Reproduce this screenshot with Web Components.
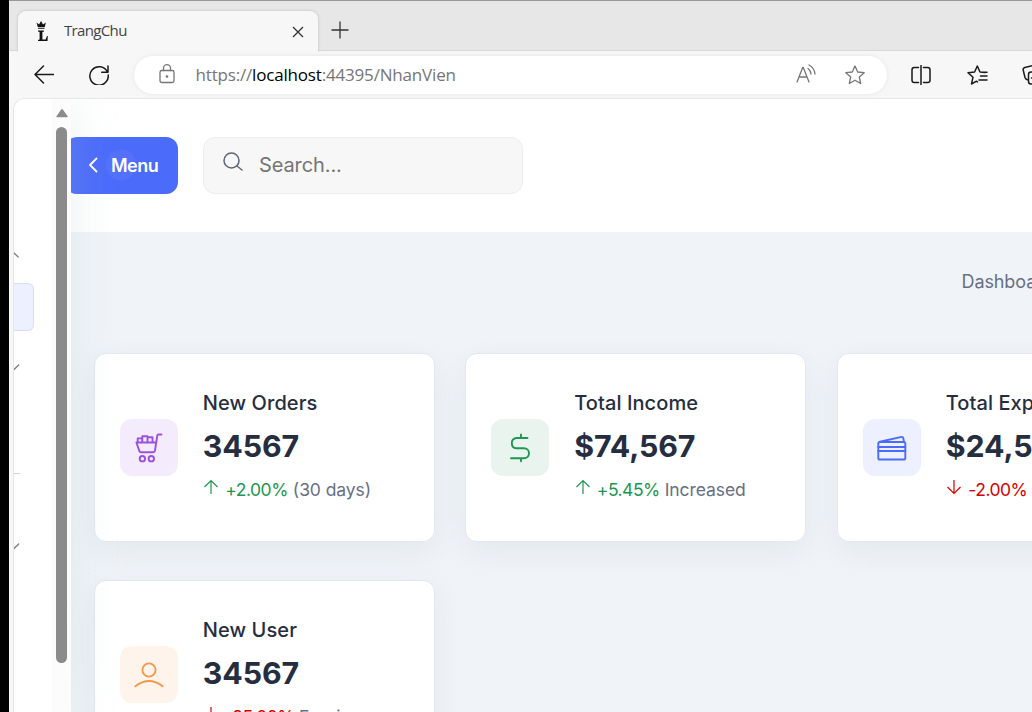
<!DOCTYPE html>
<html lang="vi">
<head>
<meta charset="utf-8">
<title>TrangChu</title>
<style>
html,body{margin:0;height:100%;overflow:hidden;background:#000}
body{font-family:Inter,"Liberation Sans",sans-serif}
</style>
</head>
<body>
<browser-window>
  <browser-tabs slot="tabs">TrangChu</browser-tabs>
  <browser-toolbar slot="toolbar"><span slot="scheme">https://</span><span slot="host">localhost</span><span slot="path">:44395/NhanVien</span></browser-toolbar>
  <side-rail></side-rail>
  <dash-main>
    <dash-header slot="header"></dash-header>
    <stat-card tone="purple" dir="up"><i-cart slot="icon"></i-cart><span slot="title">New Orders</span><span slot="value">34567</span><span slot="delta">+2.00%</span><span slot="note">(30 days)</span></stat-card>
    <stat-card tone="green" dir="up"><i-dollar slot="icon"></i-dollar><span slot="title">Total Income</span><span slot="value">$74,567</span><span slot="delta">+5.45%</span><span slot="note">Increased</span></stat-card>
    <stat-card tone="blue" dir="down"><i-cards slot="icon"></i-cards><span slot="title">Total Expense</span><span slot="value">$24,567</span><span slot="delta">-2.00%</span><span slot="note">Expense</span></stat-card>
    <stat-card tone="orange" dir="down"><i-user slot="icon"></i-user><span slot="title">New User</span><span slot="value">34567</span><span slot="delta">-25.00%</span><span slot="note">Earning</span></stat-card>
  </dash-main>
</browser-window>
<script>
function define(name, html) {
  const t = document.createElement('template');
  t.innerHTML = html;
  customElements.define(name, class extends HTMLElement {
    constructor() {
      super();
      this.attachShadow({mode: 'open'}).append(t.content.cloneNode(true));
    }
  });
}
const svg = (w, h, body, sw = 1.4) => `<svg width="${w}" height="${h}" viewBox="0 0 ${w} ${h}" fill="none" stroke="currentColor" stroke-width="${sw}" stroke-linecap="round" stroke-linejoin="round">${body}</svg>`;
const icon = (name, body, sw) => define(name, `<style>:host{display:block;width:58px;height:57px}svg{display:block}</style>${svg(58, 57, body, sw)}`);

icon('i-cart', `<path d="M41.500 15.500h-3q-1 0-1.200 1l-2.300 15q-.3 1.700-2 1.700H21q-1.300 0-1.700-1.300L16.400 23.500h19.300M17.700 23v-3.600h4.500V23M22.300 22.500v-5.300h5.200v5.500M27.500 18.200h5v4.500"/><circle cx="22.400" cy="39.700" r="2.700"/><circle cx="31.300" cy="39.700" r="2.700"/>`, 1.9);
icon('i-dollar', `<path d="M36.500 19H25.300a5.200 5.200 0 0 0 0 10.300h7.700a5 5 0 0 1 0 10H20M30 15.500V19M30 39.300v3"/>`, 1.9);
icon('i-cards', `<rect x="15.300" y="23" width="27" height="17.500" rx="1.600"/><path d="M15.300 28h27M15.300 32h27M17 22.700l21.500-4.800q1.400-.2 1.700 1l.8 4"/>`, 1.9);
icon('i-user', `<circle cx="29" cy="24" r="6.600"/><path d="M15.400 40.300q13.600-10.600 27.200 0"/>`, 1.9);

define('browser-window', `<style>
:host{display:flex;flex-direction:column;box-sizing:border-box;width:1023px;height:712px;margin-left:9px;background:#f7f7f7;overflow:hidden}
.page{flex:1;min-height:0;display:flex;margin-left:4px;border:1px solid #e6e6e6;border-right:0;border-bottom:0;border-radius:12px 0 0 0;background:#fff;overflow:hidden}
</style><slot name="tabs"></slot><slot name="toolbar"></slot><div class="page"><slot></slot></div>`);

define('browser-tabs', `<style>
:host{display:flex;box-sizing:border-box;height:51px;flex:none;background:#e7e7e7;border-top:1px solid #999;border-bottom:1px solid #d8d8d8;color:#444}
.tab{display:flex;align-items:center;box-sizing:border-box;width:300px;height:41px;margin:10px 0 -1px 9px;padding:0 13px 0 17px;background:#f7f7f7;border-radius:8px 8px 0 0;box-shadow:0 0 3px #bbb;clip-path:inset(-4px -4px 0 -4px)}
.name{flex:1;margin-left:13px;padding-bottom:3px;font:15px "Open Sans","Noto Sans",sans-serif;letter-spacing:-.65px}
.tab svg{flex:none}.tab .fav{margin-bottom:2px}.plus{margin:20px 0 0 12.500px}
</style><div class="tab">
<svg class="fav" width="16" height="22" viewBox="0 0 16 22" fill="#111"><path d="M1.500 2.500l2.500 2L6 1l2 3.500L10.800 2.500l-1 4.500H2.800zM3 7.800h6.500v1H3zM3 10.500h6v1l-1.600.5v7.500h3.200l1.400-3.500h.8L12.500 21H3v-1l1.600-.5V12L3 11.500z"/></svg>
<span class="name"><slot></slot></span>
<svg width="14" height="14" viewBox="0 0 14 14" stroke="#333" stroke-width="1.300"><path d="M2 2l10 10M12 2L2 12"/></svg></div>
<svg class="plus" width="18" height="18" viewBox="0 0 18 18" stroke="#333" stroke-width="1.300"><path d="M9 .5v17M.5 9h17"/></svg>`);

define('browser-toolbar', `<style>
:host{display:flex;align-items:center;box-sizing:border-box;height:47px;flex:none;padding-left:25px;color:#1a1a1a}
svg{display:block;flex:none}
.reload{margin-left:35px}
.bar{display:flex;flex:none;align-items:center;box-sizing:border-box;width:753px;height:38px;margin:0 24px 0 25px;padding:0 22px 0 24.500px;border-radius:19px;background:#fff;box-shadow:0 0 4px #e4e4e4;color:#767676}
.bar>svg:first-child{margin-bottom:1px}
.url{flex:1;margin-left:21px;font:17px "Open Sans","Noto Sans",sans-serif;letter-spacing:-.18px;white-space:nowrap}
.host{color:#000}
.read{margin:0 29px 2px 0}.fav{margin:0 33px 0 36px}
</style>
${svg(20, 20, '<path d="M19.500 9.500H1M9.500 1L1 9.500 9.500 18"/>', 1.5)}
<span class="reload">${svg(20, 20, '<path d="M18.500 7.300A9.200 9.200 0 1 0 19.200 10M19 1v6.300h-6.300"/>', 1.5)}</span>
<div class="bar">
${svg(16, 20, '<rect x="1" y="6.500" width="14" height="12" rx="1.800"/><path d="M4.500 6.500V4.200a3.500 3.500 0 0 1 7 0v2.300"/><circle cx="8" cy="12.500" r=".7" fill="currentColor"/>', 1.3)}
<span class="url"><slot name="scheme"></slot><span class="host"><slot name="host"></slot></span><slot name="path"></slot></span>
<span class="read">${svg(20, 20, '<path d="M1 18L6.700 3.500h.6L13 18M3.200 13h7.600M12 4.500q2.600 2 3 5.500M13 1q5.500 3 6 9"/>', 1.3)}</span>
${svg(20, 20, '<path d="M10 1l2.700 6 6.500.7-4.900 4.300 1.400 6.500L10 15.200l-5.700 3.300L5.700 12 .8 7.700 7.300 7z"/>', 1.3)}
</div>
${svg(20, 20, '<path d="M7.500 2.500H3.300Q1 2.500 1 4.800v10.400q0 2.300 2.300 2.300h4.200M12.500 2.500h4.200Q19 2.500 19 4.800v10.400q0 2.300-2.300 2.300h-4.200M10 .5v19"/>', 1.5)}
<span class="fav">${svg(22, 20, '<path d="M10.500 17l-1-.800-5 2.800L6 12.200 1 7.700 7.600 7 10.300 1 13 7l5 .6M13.500 11H20M12 15h8M14 7.200h6" />', 1.5)}</span>
${svg(20, 20, '<path d="M12 .3L2.800 2.500Q.8 3.200 1.200 5L3 12.500q.500 1.600 2.300 2.200"/><rect x="6.500" y="7" width="13" height="12" rx="2.500"/><path d="M9.500 13h7M13 9.500v7"/>', 1.5)}`);

define('side-rail', `<style>
:host{display:flex;flex:none;width:57px;background:#fff;position:relative;z-index:1;box-shadow:0 0 48px rgba(173,195,200,.24)}
.nav{display:flex;flex-direction:column;width:38px;color:#777d8c}
.nav svg{display:block;flex:none}
.up{margin-top:150px}.active{box-sizing:border-box;width:20px;height:48px;margin-top:24px;background:#ecf0ff;border:1px solid #d5ddff;border-left:0;border-radius:0 6px 6px 0}
.a{margin-top:31px}.line{width:6px;height:1px;margin-top:101px;background:#d0d3d9}.b{margin-top:67px}
.track{display:flex;flex-direction:column;align-items:center;width:19px;background:#fcfcfc}
.track svg{display:block;margin-top:10px}.thumb{width:11px;height:536px;margin-top:9px;border-radius:6px;background:#8b8b8b}
</style><div class="nav">
<span class="up">${svg(7, 10, '<path d="M0 4l4.200 4"/>', 1.3)}</span><div class="active"></div>
<span class="a">${svg(7, 10, '<path d="M0 7.500l4.700-4.500"/>', 1.3)}</span><div class="line"></div>
<span class="b">${svg(7, 10, '<path d="M0 7.500l4.700-4.500"/>', 1.3)}</span></div>
<div class="track"><svg width="12" height="9" viewBox="0 0 12 9" fill="#8b8b8b"><path d="M6 0q.6 0 1 .7l4.600 6.600q.4.900-.6.900H1q-1 0-.6-.900L5 .7Q5.400 0 6 0"/></svg><div class="thumb"></div></div>`);

define('dash-header', `<style>
:host{display:flex;align-items:flex-start;box-sizing:border-box;height:133px;padding-top:38px;background:#fff}
.menu{display:flex;align-items:center;box-sizing:border-box;width:113px;height:57px;margin-left:-6px;padding:0 0 1px 21.500px;border-radius:12px;background:radial-gradient(circle at 56px 28px,#5371fb 15px,#4b6bfb 15.500px);color:#fff;font-weight:600;font-size:18px;letter-spacing:-.5px}
.menu span{margin-left:13.500px}
.search{display:flex;align-items:center;box-sizing:border-box;width:320px;height:57px;margin-left:25px;padding:0 0 2px 19px;border:1px solid #ececec;border-radius:12px;background:#f7f7f7;color:#757575;font-size:20px;letter-spacing:-.1px}
.search svg{color:#5d657b;margin-top:-5px}.search span{margin-left:15px}
</style><div class="menu">${svg(11, 16, '<path d="M9.500 1.500L3 8l6.500 6.500"/>', 1.8)}<span>Menu</span></div>
<div class="search">${svg(21, 20, '<circle cx="8.500" cy="8.500" r="7.500"/><path d="M14 14l5 4"/>', 1.5)}<span>Search...</span></div>`);

define('dash-main', `<style>
:host{display:block;flex:1;min-width:0;overflow:hidden;background:#f0f4f9}
.crumb{margin:38px 0 0 890.500px;height:24px;line-height:24px;font-size:18px;letter-spacing:-.1px;color:#686f83;white-space:nowrap}
.grid{display:grid;grid-template-columns:repeat(3,341px);grid-auto-rows:189px;gap:38px 30.500px;margin:59px 0 0 22.800px}
</style><slot name="header"></slot><div class="crumb">Dashboard</div><div class="grid"><slot></slot></div>`);

const tones = {purple: ['#f4ecfc', '#9b51e0'], green: ['#e9f4ee', '#219653'], blue: ['#ecf0ff', '#4b6bfb'], orange: ['#fef4eb', '#f2994a']};
const arrows = {up: ['#219653', 'M8 15V1.500M1.500 8L8 1.500 14.500 8'], down: ['#d50100', 'M8 1v13.500M1.500 8L8 14.500 14.500 8']};
customElements.define('stat-card', class extends HTMLElement {
  constructor() {
    super();
    const [bg, fg] = tones[this.getAttribute('tone')];
    const [ac, d] = arrows[this.getAttribute('dir')];
    this.attachShadow({mode: 'open'}).innerHTML = `<style>
:host{display:flex;align-items:center;box-sizing:border-box;padding:0 0 0 25px;background:#fff;border:1px solid #e2e8f0;border-radius:12px;box-shadow:0 10px 30px rgba(173,185,190,.2);white-space:nowrap}
.tile{flex:none;width:58px;height:57px;border-radius:12px;background:${bg};color:${fg}}
.text{margin-left:25px;height:120px}
.title{height:31px;line-height:31px;font-size:20px;font-weight:500;letter-spacing:.08px;color:#262d3f}
.value{height:55px;line-height:55px;font-size:30.300px;font-weight:700;letter-spacing:-.1px;color:#262d3f}
.sub{display:flex;align-items:center;height:31px;line-height:31px;font-size:17.500px;color:#686f83;letter-spacing:-.08px}
.sub svg{margin:-4px 6px 0 .5px}.delta{color:${ac};margin-right:5px;letter-spacing:-.5px}
</style><div class="tile"><slot name="icon"></slot></div><div class="text"><div class="title"><slot name="title"></slot></div><div class="value"><slot name="value"></slot></div><div class="sub"><svg width="16" height="16" viewBox="0 0 16 16" fill="none" stroke="${ac}" stroke-width="1.200"><path d="${d}"/></svg><span class="delta"><slot name="delta"></slot></span><slot name="note"></slot></div></div>`;
  }
});
</script>
</body>
</html>
